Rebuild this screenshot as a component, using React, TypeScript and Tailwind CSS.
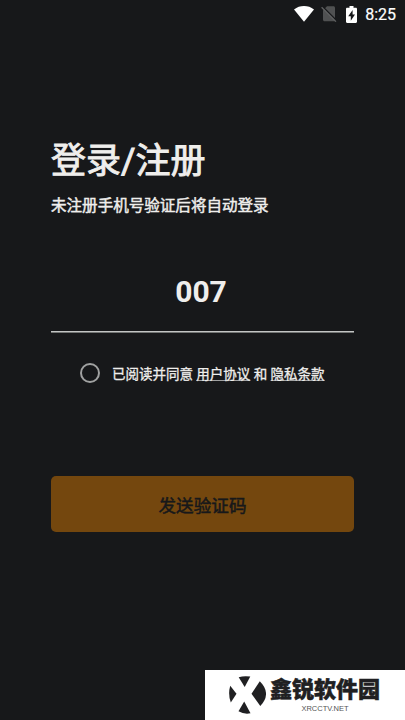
import React, { useState } from 'react';

// Status bar icons
const StatusBar: React.FC = () => (
  <header className="flex h-7 items-center justify-end pr-[9px] text-white">
    <svg className="mr-[7px] h-4 w-5" viewBox="0 0 20 16" fill="currentColor">
      <path d="M10 15.8 0 3.400C3 1.200 6.300 0 10 0s7 1.200 10 3.400L10 15.800z" />
    </svg>
    <svg className="mr-[9px] h-4 w-4" viewBox="0 0 16 16">
      <path d="M6 .3h6.500c.8 0 1.500.7 1.500 1.500v13.400H3.500c-.8 0-1.500-.7-1.500-1.500V4.300z" fill="#505152" />
      <path d="M1.400 .5 16 15.100" stroke="#17181a" strokeWidth="1.600" />
      <path d="M.6 1.200 15 15.600" stroke="#606162" strokeWidth="1.300" />
    </svg>
    <svg className="mr-[8px] h-[17px] w-[11px]" viewBox="0 0 11 17">
      <path d="M3.500 0h4v1.800h2.300c.7 0 1.200.5 1.200 1.200v12.800c0 .7-.5 1.200-1.200 1.200H1.200C.5 17 0 16.500 0 15.800V3c0-.7.5-1.200 1.200-1.200h2.300z" fill="#fff" />
      <path d="M6.600 4 2.200 10.200h2.600v4.600l4.200-6.400H6.600z" fill="#17181a" />
    </svg>
    <span className="pt-px font-['Roboto',sans-serif] text-base leading-7 [-webkit-text-stroke:0.2px_white]">8:25</span>
  </header>
);

const Watermark: React.FC = () => (
  <footer className="absolute bottom-0 right-0 flex h-[50px] w-[200px] bg-white pl-6 pt-1.5 text-[#202022]">
    <svg className="h-[38px] w-[37px] shrink-0" viewBox="0 0 37 38" fill="currentColor">
      <path d="M9.700 1.200Q15 -.5 21.300 .5L15.700 11z" />
      <path d="M1.200 9.700 7.500 17.700 1.800 26.500Q-1.200 18.500 1.200 9.700z" />
      <path d="M30.800 5.300Q43 17.500 31.300 30L22.500 17.700z" />
      <path d="M15.200 25.500 21.500 37.300Q15 38.500 9.500 35.300z" />
    </svg>
    <div className="ml-[3px] flex w-[112px] flex-col items-center">
      <p className="-mt-px whitespace-nowrap font-['Noto_Sans_CJK_SC',sans-serif] text-[22px] font-black leading-[25px] [-webkit-text-stroke:0.5px_#202022]">
        鑫锐软件园
      </p>
      <p className="mt-1 whitespace-nowrap font-['Liberation_Sans',sans-serif] text-[7.500px] leading-[10px] text-[#555]">XRCCTV.NET</p>
    </div>
  </footer>
);

const App: React.FC = () => {
  const [phone, setPhone] = useState('007');
  const [agreed, setAgreed] = useState(false);

  return (
    <div className="relative h-[720px] w-[405px] overflow-hidden bg-[#17181a] font-['Roboto','Noto_Sans_CJK_SC',sans-serif] text-[#efeeec]">
      <StatusBar />

      <main className="px-[51px] pt-[109px]">
        <h1 className="whitespace-nowrap text-[35px] font-normal leading-[50px] [-webkit-text-stroke:0.9px_#efeeec]">登录/注册</h1>
        <p className="mt-[7px] whitespace-nowrap text-[15.55px] font-normal leading-6 [-webkit-text-stroke:0.45px_#efeeec]">未注册手机号验证后将自动登录</p>

        {/* Phone number */}
        <input
          aria-label="手机号"
          value={phone}
          onChange={(e) => setPhone(e.target.value)}
          className="mt-[52px] block h-[62px] w-full border-b border-[#c3c5c4] bg-transparent pb-[18px] pr-[3px] text-center font-['Roboto',sans-serif] text-[30px] font-bold leading-[44px] outline-none"
        />
        <div className="h-px bg-[#737574]" />

        {/* Agreement */}
        <div className="mt-[30px] flex h-5 items-center pl-[29px]">
          <button
            aria-label="同意"
            aria-pressed={agreed}
            onClick={() => setAgreed(!agreed)}
            className={`h-5 w-5 shrink-0 rounded-full border-2 border-[#a0a1a1] ${agreed ? 'bg-[#74470e]' : ''}`}
          />
          <p className="ml-3 whitespace-nowrap pt-0.5 text-[13.5px] font-normal leading-5 [-webkit-text-stroke:0.3px_#efeeec]">
            已阅读并同意 <a className="underline decoration-[#a0a1a1] decoration-1 underline-offset-1">用户协议</a> 和{' '}
            <a className="underline decoration-[#a0a1a1] decoration-1 underline-offset-1">隐私条款</a>
          </p>
        </div>

        <button className="mt-[93px] h-14 w-full rounded-[5px] bg-[#74470e] pt-[5px] text-[17.6px] font-normal text-[#17181a] [-webkit-text-stroke:0.5px_#17181a]">
          发送验证码
        </button>
      </main>

      <Watermark />
    </div>
  );
};

export default App;
